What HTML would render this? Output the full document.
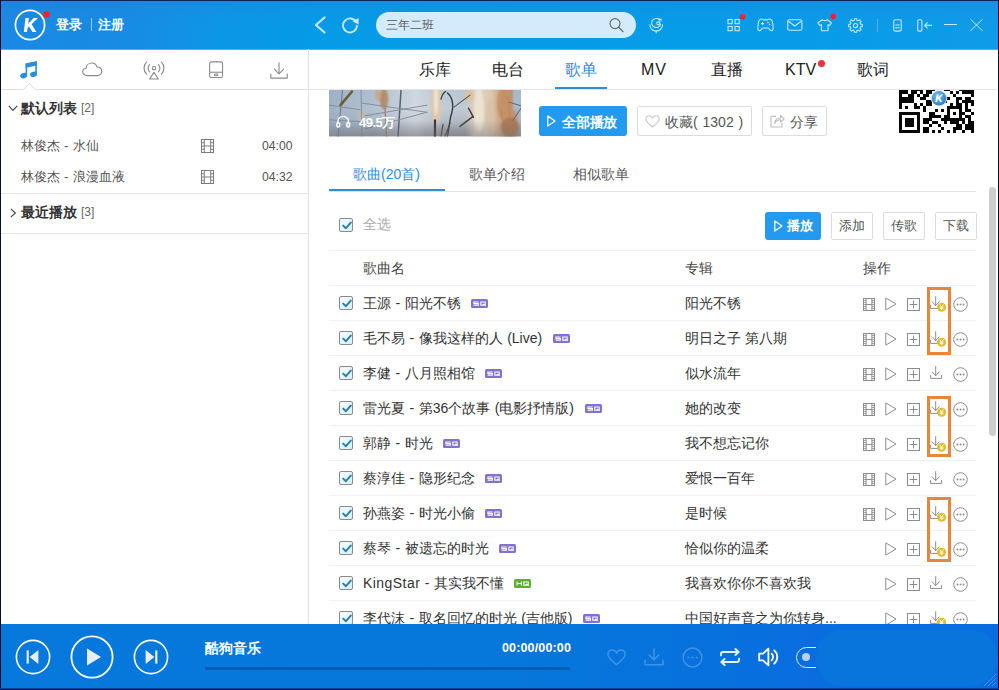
<!DOCTYPE html><html lang="zh"><head><meta charset="utf-8"><title>KuGou</title><style>
*{margin:0;padding:0;box-sizing:border-box}
html,body{width:999px;height:690px;overflow:hidden;background:#fff}
body{position:relative;font-family:"Liberation Sans",sans-serif;font-size:14px;color:#333}
.abs{position:absolute}
.t{position:absolute;white-space:nowrap;line-height:1}
svg{position:absolute;overflow:visible}
#top{left:0;top:0;width:999px;height:50px;background:linear-gradient(to bottom,rgba(45,120,215,0.40) 0,rgba(45,120,215,0.12) 22%,rgba(45,120,215,0) 55%),linear-gradient(to right,#1b89e3 0,#188be4 12%,#0c96e6 22%,#059be7 31%,#059ce8 72%,#0f9be8 100%);border-bottom:1px solid #4fb0ec}
#bot{left:0;top:624px;width:999px;height:66px;background:linear-gradient(to right,#0779dd 0,#0677db 50%,#0771dd 72%,#0a6ce1 85%,#0a6ce1 100%)}
.hl{position:absolute;height:1px;background:#f1f1f1}
.cb{position:absolute;width:14px;height:14px;border:1px solid #8a8a8a;border-radius:2px;background:linear-gradient(135deg,#f4fbfd,#d9f1f8)}
.btn{position:absolute;height:28px;border:1px solid #dcdcdc;border-radius:2px;background:#fff;color:#555;font-size:13px;text-align:center;line-height:26px}
</style></head><body>
<div id="top" class="abs"></div>
<svg style="left:14px;top:9px" width="34" height="32" viewBox="0 0 34 32"><circle cx="16" cy="16" r="14.6" fill="none" stroke="#fff" stroke-width="1.7"/><path d="M11.5 9 h3.3 l-0.6 5.8 l5.6 -5.8 h4.2 l-6.5 6.3 l5 7.7 h-4 l-3.4 -5.6 l-1.6 1.5 l-0.5 4.1 h-3.2 z" fill="#fff"/><circle cx="32.5" cy="5.3" r="3.4" fill="#f5222d"/></svg>
<div class="t" style="left:56px;top:18px;font-size:13px;font-weight:bold;color:#fff">登录</div>
<div class="abs" style="left:91px;top:18px;width:1px;height:13px;background:#9fd0f5"></div>
<div class="t" style="left:98px;top:18px;font-size:13px;font-weight:bold;color:#fff">注册</div>
<svg style="left:313px;top:16px" width="14" height="18" viewBox="0 0 14 18"><path d="M11.5 1.5 L3 9 L11.5 16.5" fill="none" stroke="#c9e8fb" stroke-width="2.2" stroke-linecap="round" stroke-linejoin="round"/></svg>
<svg style="left:341px;top:16px" width="19" height="18" viewBox="0 0 19 18"><path d="M15.2 6.2 A7 7 0 1 0 16 9.6" fill="none" stroke="#c9e8fb" stroke-width="1.8" stroke-linecap="round"/><path d="M11.4 5.2 L17.6 8.6 L17.6 2 z" fill="#c9e8fb"/></svg>
<div class="abs" style="left:376px;top:12px;width:260px;height:26px;border-radius:13px;background:#d3ebfb"></div>
<div class="t" style="left:386px;top:19px;font-size:12px;color:#585858">三年二班</div>
<svg style="left:608px;top:17px" width="18" height="17" viewBox="0 0 18 17"><circle cx="7" cy="6.6" r="5" fill="none" stroke="#666" stroke-width="1.1"/><path d="M10.7 10.3 L15 14.6" stroke="#666" stroke-width="1.3" stroke-linecap="round"/></svg>
<svg style="left:648.2px;top:16.6px" width="16.4" height="16.4" viewBox="0 0 18 18"><g fill="none" stroke="#c4e9fc" stroke-width="1.2" stroke-linecap="round"><path d="M12.5 3 A5 5 0 1 0 13.8 8"/><path d="M2 8.5 A7 7 0 0 0 16 8.5"/><path d="M9 15.5 V17.5"/><circle cx="11.3" cy="7" r="1.6"/><path d="M12.9 7 V2.2 L15 3.4"/></g></svg>
<svg style="left:727px;top:16px" width="20" height="16" viewBox="0 0 20 16"><g fill="none" stroke="#c4e9fc" stroke-width="1.1"><rect x="1" y="3.5" width="4.2" height="4.2"/><rect x="8" y="3.5" width="4.2" height="4.2"/><rect x="1" y="10.5" width="4.2" height="4.2"/><rect x="8" y="10.5" width="4.2" height="4.2"/></g><circle cx="15.5" cy="0.8" r="2.8" fill="#f5222d"/></svg>
<svg style="left:757px;top:18px" width="17" height="14" viewBox="0 0 17 14"><path d="M4.6 1 C2.5 1 1.6 3 1.2 6 C0.7 9.5 0.4 12.6 2.4 12.8 C4 13 4.6 10.2 6 10 H11 C12.4 10.2 13 13 14.6 12.8 C16.6 12.6 16.3 9.5 15.8 6 C15.4 3 14.5 1 12.4 1 C11.2 1 11 1.9 10 1.9 H7 C6 1.9 5.8 1 4.6 1 Z" fill="none" stroke="#c4e9fc" stroke-width="1.1" stroke-linejoin="round"/><path d="M4 5.6 H7 M5.5 4.1 V7.1" stroke="#c4e9fc" stroke-width="1.05"/><circle cx="11" cy="4.6" r="0.8" fill="#c9e8fb"/><circle cx="12.6" cy="6.6" r="0.8" fill="#c9e8fb"/></svg>
<svg style="left:787px;top:19px" width="16" height="12" viewBox="0 0 16 12"><rect x="0.7" y="0.7" width="14.2" height="10.6" rx="1.6" fill="none" stroke="#c4e9fc" stroke-width="1.1"/><path d="M1.5 2.2 L7.8 7 L14.2 2.2" fill="none" stroke="#c4e9fc" stroke-width="1.1" stroke-linejoin="round"/></svg>
<svg style="left:817px;top:13px" width="20" height="19" viewBox="0 0 20 19"><path d="M5.2 6.6 L0.9 10 L3 12.6 L4.4 11.6 V17.8 H11 V11.6 L12.4 12.6 L14.5 10 L10.2 6.6 C9.6 8 5.8 8 5.2 6.6 Z" fill="none" stroke="#c4e9fc" stroke-width="1.1" stroke-linejoin="round"/><circle cx="16.2" cy="3.6" r="2.8" fill="#f5222d"/></svg>
<svg style="left:848px;top:18px" width="15" height="15" viewBox="0 0 15 15"><path d="M6.26 2.35 L6.31 0.70 L8.69 0.70 L8.74 2.35 L10.27 2.98 L11.47 1.85 L13.15 3.53 L12.02 4.73 L12.65 6.26 L14.30 6.31 L14.30 8.69 L12.65 8.74 L12.02 10.27 L13.15 11.47 L11.47 13.15 L10.27 12.02 L8.74 12.65 L8.69 14.30 L6.31 14.30 L6.26 12.65 L4.73 12.02 L3.53 13.15 L1.85 11.47 L2.98 10.27 L2.35 8.74 L0.70 8.69 L0.70 6.31 L2.35 6.26 L2.98 4.73 L1.85 3.53 L3.53 1.85 L4.73 2.98 Z" fill="none" stroke="#c4e9fc" stroke-width="1.05" stroke-linejoin="round"/><circle cx="7.5" cy="7.5" r="2.1" fill="none" stroke="#c4e9fc" stroke-width="1.05"/></svg>
<div class="abs" style="left:877px;top:19px;width:1px;height:13px;background:#5cb0ee"></div>
<svg style="left:893px;top:19px" width="9" height="13" viewBox="0 0 9 13"><rect x="0.7" y="0.7" width="7.6" height="11.4" rx="1.5" fill="none" stroke="#c4e9fc" stroke-width="1.1"/><path d="M2.2 6 H6.8 M2.2 8.8 H6.8" stroke="#c4e9fc" stroke-width="1.05"/></svg>
<svg style="left:917px;top:19px" width="16" height="13" viewBox="0 0 16 13"><rect x="0.7" y="0.7" width="4.2" height="11.4" rx="1.3" fill="none" stroke="#c4e9fc" stroke-width="1.1"/><path d="M7.5 6.4 H15 M10.6 3.4 L7.6 6.4 L10.6 9.4" fill="none" stroke="#c4e9fc" stroke-width="1.1"/></svg>
<div class="abs" style="left:944px;top:24px;width:13px;height:1px;background:#c9e8fb"></div>
<svg style="left:970px;top:19px" width="13" height="12" viewBox="0 0 13 12"><path d="M0.5 0.3 L12.5 11.7 M12.5 0.3 L0.5 11.7" stroke="#c4e9fc" stroke-width="1"/></svg>
<div class="abs" style="left:308px;top:49px;width:1px;height:575px;background:#e3e3e3"></div>
<svg style="left:20px;top:61px" width="18" height="18" viewBox="0 0 18 18"><g fill="#2b8ddb"><ellipse cx="3.7" cy="14.6" rx="3.5" ry="2.7" transform="rotate(-18 3.7 14.6)"/><ellipse cx="13.6" cy="13.3" rx="3.5" ry="2.7" transform="rotate(-18 13.6 13.3)"/><path d="M5.6 2.6 L16.9 0.2 V13.3 H15.3 V4.2 L7.2 5.9 V14.6 H5.6 Z"/><path d="M5.6 2.6 L16.9 0.2 V4.4 L5.6 6.8 Z"/></g></svg>
<svg style="left:81.6px;top:62.2px" width="20.6" height="14.6" viewBox="0 0 23 16"><path d="M6 15 C2.6 15 0.8 13 0.8 10.8 C0.8 8.6 2.4 7 4.6 6.8 C4.8 3.6 7.4 1 10.8 1 C13.8 1 16 2.8 16.8 5.4 C19.8 5.4 22 7.4 22 10.2 C22 13 19.8 15 17 15 Z" fill="none" stroke="#8a8a8a" stroke-width="1.3" stroke-linejoin="round"/></svg>
<svg style="left:143px;top:61px" width="22" height="19" viewBox="0 0 22 19"><g fill="none" stroke="#8a8a8a" stroke-width="1.15" stroke-linecap="round"><path d="M3.6 1.2 A8.4 8.4 0 0 0 3.6 13.2"/><path d="M18.4 1.2 A8.4 8.4 0 0 1 18.4 13.2"/><path d="M6.6 3.6 A5 5 0 0 0 6.6 10.8"/><path d="M15.4 3.6 A5 5 0 0 1 15.4 10.8"/><circle cx="11" cy="7.2" r="1.7"/><path d="M11 11.4 L6.6 18 H15.4 Z" stroke-linejoin="round"/></g></svg>
<svg style="left:209px;top:61px" width="14.4" height="17.6" viewBox="0 0 16 19"><g fill="none" stroke="#8a8a8a" stroke-width="1.2"><rect x="0.7" y="0.7" width="14.4" height="17.4" rx="2"/><path d="M0.7 12.2 H15.1"/><rect x="6" y="14.2" width="3.8" height="2" rx="1"/></g></svg>
<svg style="left:269.8px;top:61.8px" width="18" height="17.4" viewBox="0 0 19 18"><g fill="none" stroke="#8a8a8a" stroke-width="1.2" stroke-linecap="round" stroke-linejoin="round"><path d="M9.5 0.8 V12"/><path d="M4.6 7.4 L9.5 12.3 L14.4 7.4"/><path d="M0.8 12.6 V16.8 H18.2 V12.6"/></g></svg>
<svg style="left:1px;top:82px" width="307" height="8" viewBox="0 0 307 8"><path d="M0 7.5 H22.5 L28.5 1.5 L34.5 7.5 H307" fill="none" stroke="#dedede" stroke-width="1"/></svg>
<svg style="left:8px;top:105px" width="10" height="7" viewBox="0 0 10 7"><path d="M0.8 0.8 L5 5.4 L9.2 0.8" fill="none" stroke="#444" stroke-width="1.1"/></svg>
<div class="t" style="left:21px;top:102px;font-size:13.5px;font-weight:bold;color:#333">默认列表</div>
<div class="t" style="left:81px;top:102px;font-size:12px;color:#666">[2]</div>
<div class="t" style="left:21px;top:139px;font-size:13.3px;color:#555;word-spacing:0.4px">林俊杰 - 水仙</div>
<svg style="left:201px;top:139px" width="13" height="14" viewBox="0 0 13 14"><g fill="none" stroke="#7d7d7d" stroke-width="1"><rect x="0.5" y="0.5" width="12" height="13"/><path d="M3.3 0.5 V13.5 M9.7 0.5 V13.5 M3.3 7 H9.7 M0.5 3.7 H3.3 M0.5 7 H3.3 M0.5 10.3 H3.3 M9.7 3.7 H12.5 M9.7 7 H12.5 M9.7 10.3 H12.5"/></g></svg>
<div class="t" style="left:262px;top:140px;font-size:12.2px;color:#555">04:00</div>
<div class="t" style="left:21px;top:170px;font-size:13.3px;color:#555;word-spacing:0.4px">林俊杰 - 浪漫血液</div>
<svg style="left:201px;top:170px" width="13" height="14" viewBox="0 0 13 14"><g fill="none" stroke="#7d7d7d" stroke-width="1"><rect x="0.5" y="0.5" width="12" height="13"/><path d="M3.3 0.5 V13.5 M9.7 0.5 V13.5 M3.3 7 H9.7 M0.5 3.7 H3.3 M0.5 7 H3.3 M0.5 10.3 H3.3 M9.7 3.7 H12.5 M9.7 7 H12.5 M9.7 10.3 H12.5"/></g></svg>
<div class="t" style="left:262px;top:171px;font-size:12.2px;color:#555">04:32</div>
<div class="hl" style="left:1px;top:193px;width:307px;background:#e6e6e6"></div>
<svg style="left:10px;top:208px" width="7" height="10" viewBox="0 0 7 10"><path d="M0.8 0.8 L5.4 5 L0.8 9.2" fill="none" stroke="#444" stroke-width="1.1"/></svg>
<div class="t" style="left:21px;top:206px;font-size:13.5px;font-weight:bold;color:#333">最近播放</div>
<div class="t" style="left:81px;top:206px;font-size:12px;color:#666">[3]</div>
<div class="hl" style="left:1px;top:233px;width:307px;background:#e6e6e6"></div>
<div class="t" style="left:419px;top:62px;font-size:16px;color:#222">乐库</div>
<div class="t" style="left:492px;top:62px;font-size:16px;color:#222">电台</div>
<div class="t" style="left:565px;top:62px;font-size:16px;color:#2b8ddb">歌单</div>
<div class="t" style="left:641px;top:62px;font-size:16px;color:#222;letter-spacing:1px">MV</div>
<div class="t" style="left:711px;top:62px;font-size:16px;color:#222">直播</div>
<div class="t" style="left:785px;top:62px;font-size:16px;color:#222">KTV</div>
<div class="t" style="left:857px;top:62px;font-size:16px;color:#222">歌词</div>
<div class="hl" style="left:309px;top:89px;width:688px;background:#e4e4e4"></div>
<div class="abs" style="left:555px;top:87px;width:52px;height:2px;background:#2b8ddb"></div>
<div class="abs" style="left:818px;top:60px;width:7px;height:7px;border-radius:50%;background:#f0303a"></div>
<svg style="left:329px;top:89.5px" width="192" height="46.5" viewBox="0 0 192 46" preserveAspectRatio="none">
<defs><linearGradient id="bg" x1="0" y1="0" x2="0" y2="1"><stop offset="0" stop-color="#b7c6d5"/><stop offset="0.4" stop-color="#c2ccd6"/><stop offset="0.72" stop-color="#abb1ba"/><stop offset="1" stop-color="#808287"/></linearGradient>
<linearGradient id="bgx" x1="0" y1="0" x2="1" y2="0"><stop offset="0" stop-color="#93a9c0" stop-opacity="0.75"/><stop offset="0.22" stop-color="#a3b6c9" stop-opacity="0.5"/><stop offset="0.45" stop-color="#dde2e6" stop-opacity="0.6"/><stop offset="0.6" stop-color="#c3ced8" stop-opacity="0.3"/><stop offset="1" stop-color="#a3b4c4" stop-opacity="0.3"/></linearGradient>
<linearGradient id="rm" x1="0" y1="0" x2="1" y2="0"><stop offset="0" stop-color="#d9cab8" stop-opacity="0"/><stop offset="0.18" stop-color="#e0d2c0" stop-opacity="0.95"/><stop offset="0.46" stop-color="#dcc9b2"/><stop offset="0.68" stop-color="#c99b76"/><stop offset="0.84" stop-color="#c08d66"/><stop offset="0.93" stop-color="#b79a82" stop-opacity="0.7"/><stop offset="1" stop-color="#a9b9c9" stop-opacity="0.2"/></linearGradient>
<filter id="bl" x="-30%" y="-30%" width="160%" height="160%"><feGaussianBlur stdDeviation="1.3"/></filter>
<filter id="bl2" x="-20%" y="-20%" width="140%" height="140%"><feGaussianBlur stdDeviation="0.6"/></filter>
<clipPath id="cp"><rect x="0" y="0" width="192" height="46"/></clipPath></defs>
<g clip-path="url(#cp)">
<rect width="192" height="46" fill="url(#bg)"/><rect width="192" height="46" fill="url(#bgx)"/>
<rect x="136" y="-2" width="56" height="50" fill="url(#rm)"/>
<g filter="url(#bl)">
<ellipse cx="55" cy="9" rx="4.2" ry="10.5" fill="#b68d6c"/>
<ellipse cx="33" cy="27" rx="2.6" ry="8" fill="#ccb9a6"/><ellipse cx="49" cy="5" rx="3" ry="6" fill="#c7a98d"/>
<ellipse cx="107" cy="12" rx="5.6" ry="22" fill="#dcc7ad"/>
<ellipse cx="107" cy="10" rx="2" ry="15" fill="#efe5d6"/>
<ellipse cx="150" cy="20" rx="5" ry="22" fill="#ece2d4"/>
<ellipse cx="161" cy="26" rx="4" ry="18" fill="#d8c3a6"/>
<ellipse cx="174" cy="14" rx="6" ry="16" fill="#c38d63" opacity="0.8"/>
<ellipse cx="181" cy="37" rx="9" ry="10" fill="#a9764f" opacity="0.85"/>
<rect x="184" y="-2" width="10" height="22" fill="#a6bacc"/>
<ellipse cx="140" cy="6" rx="5" ry="7" fill="#d9c4a9"/>
</g>
<g filter="url(#bl2)" fill="none" stroke-linecap="round">
<path d="M13.5 0 L9 46" stroke="#71808f" stroke-width="1.2"/>
<path d="M23 1.5 L11.5 15" stroke="#6e5c33" stroke-width="2.6"/>
<path d="M32 0 L33 46" stroke="#8492a1" stroke-width="1"/>
<path d="M56 18 L57.5 46" stroke="#a08468" stroke-width="1.3"/>
<path d="M72 0 L69 46" stroke="#54616f" stroke-width="1.5"/>
<path d="M0 15 L31 19.5 M33 13 L98 22 M36 25.5 L98 15 M0 29.5 L36 31.5 M36 38.5 L98 22" stroke="#7c8b9c" stroke-width="0.9"/>
<path d="M106 30 L106 46" stroke="#3a3836" stroke-width="2.2"/>
<path d="M112 9 C113 5 115 2.5 116.5 1.5" stroke="#3d3d42" stroke-width="1.3"/>
<path d="M118.5 3 C124 8 125 17 121.5 27 L118.5 46" stroke="#3b3b3f" stroke-width="1.4"/>
<path d="M125 17 L141 5" stroke="#4c5058" stroke-width="1"/>
<path d="M131 36 L144 26 M139.5 18 L144.5 27" stroke="#46413c" stroke-width="1.5"/>
<path d="M112 46 L114 34 M116 46 L121 33" stroke="#4a4643" stroke-width="1.2"/>
<path d="M180 12 L192 15.5 M184 30 L192 18" stroke="#5d6873" stroke-width="1"/>
<path d="M172 20 L176 46 M179 6 L181 30" stroke="#b07d56" stroke-width="0.8" opacity="0.6"/>
</g>
<rect y="30" width="192" height="16" fill="url(#dk)"/>
</g>
<defs><linearGradient id="dk" x1="0" y1="0" x2="0" y2="1"><stop offset="0" stop-color="#6f7076" stop-opacity="0"/><stop offset="1" stop-color="#6f7076" stop-opacity="0.45"/></linearGradient></defs>
</svg>
<svg style="left:336.4px;top:115px" width="14.4" height="13" viewBox="0 0 13 13" preserveAspectRatio="none"><g fill="none" stroke="#fff" stroke-width="1.3" stroke-linecap="round"><path d="M1.8 8 V6 A4.7 4.7 0 0 1 11.2 6 V8"/><rect x="0.8" y="7.6" width="2.4" height="4.4" rx="1.1"/><rect x="9.8" y="7.6" width="2.4" height="4.4" rx="1.1"/></g></svg>
<div class="t" style="left:359px;top:116px;font-size:13px;font-weight:bold;color:#fff;letter-spacing:-0.5px">49.5万</div>
<div class="abs" style="left:539px;top:106px;width:88px;height:30px;border-radius:3px;background:#239af0"></div>
<svg style="left:547px;top:115px" width="9" height="12" viewBox="0 0 9 12"><path d="M0.8 0.9 L8 6 L0.8 11.1 Z" fill="none" stroke="#fff" stroke-width="1.2" stroke-linejoin="round"/></svg>
<div class="t" style="left:562px;top:115px;font-size:14px;font-weight:bold;color:#fff;letter-spacing:-0.2px">全部播放</div>
<div class="btn" style="left:637px;top:106px;width:115px;height:30px"></div>
<svg style="left:645px;top:115px" width="15" height="13" viewBox="0 0 15 13"><path d="M7.5 12 C5 9.8 0.8 7 0.8 4 C0.8 2 2.2 0.8 4 0.8 C5.6 0.8 6.8 1.8 7.5 3 C8.2 1.8 9.4 0.8 11 0.8 C12.8 0.8 14.2 2 14.2 4 C14.2 7 10 9.8 7.5 12 Z" fill="none" stroke="#c9c9c9" stroke-width="1.1"/></svg>
<div class="t" style="left:665px;top:114.5px;font-size:14px;color:#555;word-spacing:1px">收藏( 1302 )</div>
<div class="btn" style="left:762px;top:106px;width:65px;height:30px"></div>
<svg style="left:770px;top:114px" width="15" height="14" viewBox="0 0 15 14"><g fill="none" stroke="#bdbdbd" stroke-width="1.1" stroke-linejoin="round"><path d="M6 2.4 H1 V13 H12 V9"/><path d="M4.6 9.4 C5 5.8 7.4 4 10.6 4 V1.4 L14.2 4.8 L10.6 8.2 V5.8 C8 5.8 6 6.8 4.6 9.4 Z"/></g></svg>
<div class="t" style="left:790px;top:114.5px;font-size:14px;color:#555">分享</div>
<svg style="left:899px;top:90px" width="75" height="44" viewBox="0 0 75 44" shape-rendering="crispEdges"><g fill="#050505"><rect x="0" y="0.0" width="9" height="1.0"/><rect x="12" y="0.0" width="12" height="1.0"/><rect x="27" y="0.0" width="9" height="1.0"/><rect x="45" y="0.0" width="6" height="1.0"/><rect x="60" y="0.0" width="15" height="1.0"/><rect x="0" y="1.0" width="9" height="3.0"/><rect x="12" y="1.0" width="6" height="3.0"/><rect x="21" y="1.0" width="3" height="3.0"/><rect x="27" y="1.0" width="6" height="3.0"/><rect x="51" y="1.0" width="3" height="3.0"/><rect x="57" y="1.0" width="3" height="3.0"/><rect x="63" y="1.0" width="12" height="3.0"/><rect x="0" y="4.0" width="3" height="3.0"/><rect x="9" y="4.0" width="6" height="3.0"/><rect x="18" y="4.0" width="3" height="3.0"/><rect x="24" y="4.0" width="6" height="3.0"/><rect x="54" y="4.0" width="3" height="3.0"/><rect x="72" y="4.0" width="3" height="3.0"/><rect x="0" y="7.0" width="15" height="3.0"/><rect x="21" y="7.0" width="6" height="3.0"/><rect x="48" y="7.0" width="3" height="3.0"/><rect x="57" y="7.0" width="6" height="3.0"/><rect x="66" y="7.0" width="6" height="3.0"/><rect x="0" y="10.0" width="15" height="3.0"/><rect x="27" y="10.0" width="6" height="3.0"/><rect x="45" y="10.0" width="3" height="3.0"/><rect x="57" y="10.0" width="3" height="3.0"/><rect x="63" y="10.0" width="12" height="3.0"/><rect x="0" y="13.0" width="3" height="3.0"/><rect x="15" y="13.0" width="3" height="3.0"/><rect x="21" y="13.0" width="3" height="3.0"/><rect x="27" y="13.0" width="6" height="3.0"/><rect x="51" y="13.0" width="3" height="3.0"/><rect x="57" y="13.0" width="6" height="3.0"/><rect x="66" y="13.0" width="3" height="3.0"/><rect x="72" y="13.0" width="3" height="3.0"/><rect x="0" y="16.0" width="3" height="3.0"/><rect x="6" y="16.0" width="3" height="3.0"/><rect x="15" y="16.0" width="6" height="3.0"/><rect x="24" y="16.0" width="3" height="3.0"/><rect x="48" y="16.0" width="15" height="3.0"/><rect x="66" y="16.0" width="3" height="3.0"/><rect x="24" y="19.0" width="3" height="3.0"/><rect x="36" y="19.0" width="3" height="3.0"/><rect x="42" y="19.0" width="3" height="3.0"/><rect x="48" y="19.0" width="3" height="3.0"/><rect x="60" y="19.0" width="3" height="3.0"/><rect x="66" y="19.0" width="6" height="3.0"/><rect x="0" y="22.0" width="21" height="3.0"/><rect x="30" y="22.0" width="6" height="3.0"/><rect x="48" y="22.0" width="3" height="3.0"/><rect x="54" y="22.0" width="3" height="3.0"/><rect x="60" y="22.0" width="6" height="3.0"/><rect x="72" y="22.0" width="3" height="3.0"/><rect x="0" y="25.0" width="3" height="3.0"/><rect x="18" y="25.0" width="3" height="3.0"/><rect x="30" y="25.0" width="12" height="3.0"/><rect x="45" y="25.0" width="6" height="3.0"/><rect x="60" y="25.0" width="3" height="3.0"/><rect x="66" y="25.0" width="6" height="3.0"/><rect x="0" y="28.0" width="3" height="3.0"/><rect x="6" y="28.0" width="9" height="3.0"/><rect x="18" y="28.0" width="3" height="3.0"/><rect x="24" y="28.0" width="9" height="3.0"/><rect x="42" y="28.0" width="24" height="3.0"/><rect x="69" y="28.0" width="3" height="3.0"/><rect x="0" y="31.0" width="3" height="3.0"/><rect x="6" y="31.0" width="9" height="3.0"/><rect x="18" y="31.0" width="3" height="3.0"/><rect x="24" y="31.0" width="6" height="3.0"/><rect x="33" y="31.0" width="6" height="3.0"/><rect x="45" y="31.0" width="3" height="3.0"/><rect x="51" y="31.0" width="9" height="3.0"/><rect x="63" y="31.0" width="3" height="3.0"/><rect x="69" y="31.0" width="6" height="3.0"/><rect x="0" y="34.0" width="3" height="3.0"/><rect x="6" y="34.0" width="9" height="3.0"/><rect x="18" y="34.0" width="3" height="3.0"/><rect x="30" y="34.0" width="3" height="3.0"/><rect x="39" y="34.0" width="3" height="3.0"/><rect x="57" y="34.0" width="6" height="3.0"/><rect x="66" y="34.0" width="9" height="3.0"/><rect x="0" y="37.0" width="3" height="3.0"/><rect x="18" y="37.0" width="3" height="3.0"/><rect x="24" y="37.0" width="6" height="3.0"/><rect x="42" y="37.0" width="3" height="3.0"/><rect x="54" y="37.0" width="9" height="3.0"/><rect x="66" y="37.0" width="9" height="3.0"/><rect x="0" y="40.0" width="21" height="3.0"/><rect x="24" y="40.0" width="6" height="3.0"/><rect x="33" y="40.0" width="3" height="3.0"/><rect x="39" y="40.0" width="3" height="3.0"/><rect x="48" y="40.0" width="3" height="3.0"/><rect x="54" y="40.0" width="3" height="3.0"/><rect x="63" y="40.0" width="3" height="3.0"/><rect x="72" y="40.0" width="3" height="3.0"/></g></svg>
<svg style="left:930px;top:89px" width="18" height="18" viewBox="0 0 18 18"><defs><radialGradient id="kg" cx="0.4" cy="0.35" r="0.75"><stop offset="0" stop-color="#7cc0f0"/><stop offset="1" stop-color="#1a78c8"/></radialGradient></defs><circle cx="9" cy="9.3" r="8.2" fill="#e4f1fb"/><circle cx="9" cy="9.3" r="7.3" fill="url(#kg)"/><path d="M6.8 5.4 h1.9 l-0.5 3 l2.9 -3 h2.2 l-3.4 3.3 l2.3 4.2 h-2.1 l-1.6 -3 l-1 1 l-0.4 2 h-1.8 z" fill="#fff"/></svg>
<div class="t" style="left:353px;top:167px;font-size:14px;color:#2b8ddb">歌曲(20首)</div>
<div class="t" style="left:469px;top:167px;font-size:14px;color:#555">歌单介绍</div>
<div class="t" style="left:573px;top:167px;font-size:14px;color:#555">相似歌单</div>
<div class="hl" style="left:329px;top:191px;width:647px;background:#e2e2e2"></div>
<div class="abs" style="left:329px;top:188.5px;width:116px;height:2.5px;background:#2b8ddb"></div>
<div class="abs" style="left:989px;top:187px;width:7px;height:249px;border-radius:4px;background:#cdcdcd"></div>
<div class="cb" style="left:339px;top:218px"><svg style="left:1.5px;top:1.5px" width="10" height="9" viewBox="0 0 10 9"><path d="M1.2 4.6 L3.9 7.2 L8.8 1.6" fill="none" stroke="#2a82ad" stroke-width="2" stroke-linecap="round" stroke-linejoin="round"/></svg></div>
<div class="t" style="left:363px;top:217px;font-size:14px;color:#aaa">全选</div>
<div class="abs" style="left:765px;top:212px;width:56px;height:28px;border-radius:3px;background:#239af0"></div>
<svg style="left:774px;top:220px" width="9" height="12" viewBox="0 0 9 12"><path d="M0.8 0.9 L8 6 L0.8 11.1 Z" fill="none" stroke="#fff" stroke-width="1.2" stroke-linejoin="round"/></svg>
<div class="t" style="left:787px;top:219px;font-size:13px;font-weight:bold;color:#fff;letter-spacing:-0.5px">播放</div>
<div class="btn" style="left:831px;top:212px;width:42px">添加</div>
<div class="btn" style="left:883px;top:212px;width:42px">传歌</div>
<div class="btn" style="left:935px;top:212px;width:42px">下载</div>
<div class="hl" style="left:329px;top:250px;width:647px"></div>
<div class="t" style="left:363px;top:261px;font-size:14px;color:#444">歌曲名</div>
<div class="t" style="left:685px;top:261px;font-size:14px;color:#444">专辑</div>
<div class="t" style="left:863px;top:261px;font-size:14px;color:#444">操作</div>
<div class="hl" style="left:329px;top:285px;width:647px"></div>
<div class="cb" style="left:339px;top:296px"><svg style="left:1.5px;top:1.5px" width="10" height="9" viewBox="0 0 10 9"><path d="M1.2 4.6 L3.9 7.2 L8.8 1.6" fill="none" stroke="#2a82ad" stroke-width="2" stroke-linecap="round" stroke-linejoin="round"/></svg></div>
<div class="t" style="left:363px;top:296px;font-size:14px;color:#333;word-spacing:0.6px">王源 - 阳光不锈</div>
<svg style="left:471px;top:299px" width="17" height="9" viewBox="0 0 17 9"><rect x="0" y="0" width="17" height="9" rx="1.6" fill="#8271cd"/><g fill="none" stroke="#fff" stroke-width="1.05"><path d="M7.6 2.9 H2.9 V4.5 H7.4 V6.1 H2.6" /><path d="M9.8 2.9 H14.2 V6.1 H9.8 Z M12.3 4.9 L14.8 6.9" /></g></svg>
<div class="t" style="left:685px;top:296px;font-size:14px;color:#333">阳光不锈</div>
<svg style="left:863px;top:298px" width="12" height="13" viewBox="0 0 12 13"><g fill="none" stroke="#8c8c8c" stroke-width="1"><rect x="0.5" y="0.5" width="11" height="12"/><path d="M3.1 0.5 V12.5 M8.9 0.5 V12.5 M3.1 6.5 H8.9"/><path d="M0.5 2.5 H3.1 M0.5 4.5 H3.1 M0.5 6.5 H3.1 M0.5 8.5 H3.1 M0.5 10.5 H3.1 M8.9 2.5 H11.5 M8.9 4.5 H11.5 M8.9 6.5 H11.5 M8.9 8.5 H11.5 M8.9 10.5 H11.5" stroke-width="0.8"/></g></svg>
<svg style="left:885px;top:297px" width="12" height="14" viewBox="0 0 12 14"><path d="M0.8 0.9 L11 7 L0.8 13.1 Z" fill="none" stroke="#8c8c8c" stroke-width="1" stroke-linejoin="round"/></svg>
<svg style="left:907px;top:298px" width="13" height="13" viewBox="0 0 13 13"><g fill="none" stroke="#8c8c8c" stroke-width="1"><rect x="0.5" y="0.5" width="12" height="12"/><path d="M6.5 2.6 V10.4 M2.6 6.5 H10.4"/></g></svg>
<svg style="left:930px;top:296px" width="17" height="16" viewBox="0 0 17 16"><g fill="none" stroke="#8c8c8c" stroke-width="1" stroke-linecap="round" stroke-linejoin="round"><path d="M5.7 0.6 V9.4"/><path d="M2.2 5.9 L5.7 9.6 L9.2 5.9"/><path d="M0.6 9.4 V12.4 H11.6 V9.4"/></g><circle cx="11.6" cy="11.2" r="4.5" fill="#e2bc2c"/><path d="M9.7 8.5 L11.6 11 L13.5 8.5 M11.6 11 V14 M9.8 11.2 H13.4 M9.8 12.6 H13.4" fill="none" stroke="#fffbe6" stroke-width="0.95"/></svg>
<svg style="left:953px;top:297px" width="15" height="15" viewBox="0 0 15 15"><circle cx="7.5" cy="7.5" r="6.8" fill="none" stroke="#8c8c8c" stroke-width="1"/><g fill="#8c8c8c"><circle cx="4.4" cy="7.5" r="1"/><circle cx="7.5" cy="7.5" r="1"/><circle cx="10.6" cy="7.5" r="1"/></g></svg>
<div class="hl" style="left:329px;top:320px;width:647px"></div>
<div class="cb" style="left:339px;top:331px"><svg style="left:1.5px;top:1.5px" width="10" height="9" viewBox="0 0 10 9"><path d="M1.2 4.6 L3.9 7.2 L8.8 1.6" fill="none" stroke="#2a82ad" stroke-width="2" stroke-linecap="round" stroke-linejoin="round"/></svg></div>
<div class="t" style="left:363px;top:331px;font-size:14px;color:#333;word-spacing:0.6px">毛不易 - 像我这样的人 (Live)</div>
<svg style="left:553px;top:334px" width="17" height="9" viewBox="0 0 17 9"><rect x="0" y="0" width="17" height="9" rx="1.6" fill="#8271cd"/><g fill="none" stroke="#fff" stroke-width="1.05"><path d="M7.6 2.9 H2.9 V4.5 H7.4 V6.1 H2.6" /><path d="M9.8 2.9 H14.2 V6.1 H9.8 Z M12.3 4.9 L14.8 6.9" /></g></svg>
<div class="t" style="left:685px;top:331px;font-size:14px;color:#333">明日之子 第八期</div>
<svg style="left:863px;top:333px" width="12" height="13" viewBox="0 0 12 13"><g fill="none" stroke="#8c8c8c" stroke-width="1"><rect x="0.5" y="0.5" width="11" height="12"/><path d="M3.1 0.5 V12.5 M8.9 0.5 V12.5 M3.1 6.5 H8.9"/><path d="M0.5 2.5 H3.1 M0.5 4.5 H3.1 M0.5 6.5 H3.1 M0.5 8.5 H3.1 M0.5 10.5 H3.1 M8.9 2.5 H11.5 M8.9 4.5 H11.5 M8.9 6.5 H11.5 M8.9 8.5 H11.5 M8.9 10.5 H11.5" stroke-width="0.8"/></g></svg>
<svg style="left:885px;top:332px" width="12" height="14" viewBox="0 0 12 14"><path d="M0.8 0.9 L11 7 L0.8 13.1 Z" fill="none" stroke="#8c8c8c" stroke-width="1" stroke-linejoin="round"/></svg>
<svg style="left:907px;top:333px" width="13" height="13" viewBox="0 0 13 13"><g fill="none" stroke="#8c8c8c" stroke-width="1"><rect x="0.5" y="0.5" width="12" height="12"/><path d="M6.5 2.6 V10.4 M2.6 6.5 H10.4"/></g></svg>
<svg style="left:930px;top:331px" width="17" height="16" viewBox="0 0 17 16"><g fill="none" stroke="#8c8c8c" stroke-width="1" stroke-linecap="round" stroke-linejoin="round"><path d="M5.7 0.6 V9.4"/><path d="M2.2 5.9 L5.7 9.6 L9.2 5.9"/><path d="M0.6 9.4 V12.4 H11.6 V9.4"/></g><circle cx="11.6" cy="11.2" r="4.5" fill="#e2bc2c"/><path d="M9.7 8.5 L11.6 11 L13.5 8.5 M11.6 11 V14 M9.8 11.2 H13.4 M9.8 12.6 H13.4" fill="none" stroke="#fffbe6" stroke-width="0.95"/></svg>
<svg style="left:953px;top:332px" width="15" height="15" viewBox="0 0 15 15"><circle cx="7.5" cy="7.5" r="6.8" fill="none" stroke="#8c8c8c" stroke-width="1"/><g fill="#8c8c8c"><circle cx="4.4" cy="7.5" r="1"/><circle cx="7.5" cy="7.5" r="1"/><circle cx="10.6" cy="7.5" r="1"/></g></svg>
<div class="hl" style="left:329px;top:355px;width:647px"></div>
<div class="cb" style="left:339px;top:366px"><svg style="left:1.5px;top:1.5px" width="10" height="9" viewBox="0 0 10 9"><path d="M1.2 4.6 L3.9 7.2 L8.8 1.6" fill="none" stroke="#2a82ad" stroke-width="2" stroke-linecap="round" stroke-linejoin="round"/></svg></div>
<div class="t" style="left:363px;top:366px;font-size:14px;color:#333;word-spacing:0.6px">李健 - 八月照相馆</div>
<svg style="left:485px;top:369px" width="17" height="9" viewBox="0 0 17 9"><rect x="0" y="0" width="17" height="9" rx="1.6" fill="#8271cd"/><g fill="none" stroke="#fff" stroke-width="1.05"><path d="M7.6 2.9 H2.9 V4.5 H7.4 V6.1 H2.6" /><path d="M9.8 2.9 H14.2 V6.1 H9.8 Z M12.3 4.9 L14.8 6.9" /></g></svg>
<div class="t" style="left:685px;top:366px;font-size:14px;color:#333">似水流年</div>
<svg style="left:863px;top:368px" width="12" height="13" viewBox="0 0 12 13"><g fill="none" stroke="#8c8c8c" stroke-width="1"><rect x="0.5" y="0.5" width="11" height="12"/><path d="M3.1 0.5 V12.5 M8.9 0.5 V12.5 M3.1 6.5 H8.9"/><path d="M0.5 2.5 H3.1 M0.5 4.5 H3.1 M0.5 6.5 H3.1 M0.5 8.5 H3.1 M0.5 10.5 H3.1 M8.9 2.5 H11.5 M8.9 4.5 H11.5 M8.9 6.5 H11.5 M8.9 8.5 H11.5 M8.9 10.5 H11.5" stroke-width="0.8"/></g></svg>
<svg style="left:885px;top:367px" width="12" height="14" viewBox="0 0 12 14"><path d="M0.8 0.9 L11 7 L0.8 13.1 Z" fill="none" stroke="#8c8c8c" stroke-width="1" stroke-linejoin="round"/></svg>
<svg style="left:907px;top:368px" width="13" height="13" viewBox="0 0 13 13"><g fill="none" stroke="#8c8c8c" stroke-width="1"><rect x="0.5" y="0.5" width="12" height="12"/><path d="M6.5 2.6 V10.4 M2.6 6.5 H10.4"/></g></svg>
<svg style="left:930px;top:366px" width="17" height="16" viewBox="0 0 17 16"><g fill="none" stroke="#8c8c8c" stroke-width="1" stroke-linecap="round" stroke-linejoin="round"><path d="M5.7 0.6 V9.4"/><path d="M2.2 5.9 L5.7 9.6 L9.2 5.9"/><path d="M0.6 9.4 V12.4 H11.6 V9.4"/></g></svg>
<svg style="left:953px;top:367px" width="15" height="15" viewBox="0 0 15 15"><circle cx="7.5" cy="7.5" r="6.8" fill="none" stroke="#8c8c8c" stroke-width="1"/><g fill="#8c8c8c"><circle cx="4.4" cy="7.5" r="1"/><circle cx="7.5" cy="7.5" r="1"/><circle cx="10.6" cy="7.5" r="1"/></g></svg>
<div class="hl" style="left:329px;top:390px;width:647px"></div>
<div class="cb" style="left:339px;top:401px"><svg style="left:1.5px;top:1.5px" width="10" height="9" viewBox="0 0 10 9"><path d="M1.2 4.6 L3.9 7.2 L8.8 1.6" fill="none" stroke="#2a82ad" stroke-width="2" stroke-linecap="round" stroke-linejoin="round"/></svg></div>
<div class="t" style="left:363px;top:401px;font-size:14px;color:#333;word-spacing:0.6px">雷光夏 - 第36个故事 (电影抒情版)</div>
<svg style="left:585px;top:404px" width="17" height="9" viewBox="0 0 17 9"><rect x="0" y="0" width="17" height="9" rx="1.6" fill="#8271cd"/><g fill="none" stroke="#fff" stroke-width="1.05"><path d="M7.6 2.9 H2.9 V4.5 H7.4 V6.1 H2.6" /><path d="M9.8 2.9 H14.2 V6.1 H9.8 Z M12.3 4.9 L14.8 6.9" /></g></svg>
<div class="t" style="left:685px;top:401px;font-size:14px;color:#333">她的改变</div>
<svg style="left:863px;top:403px" width="12" height="13" viewBox="0 0 12 13"><g fill="none" stroke="#8c8c8c" stroke-width="1"><rect x="0.5" y="0.5" width="11" height="12"/><path d="M3.1 0.5 V12.5 M8.9 0.5 V12.5 M3.1 6.5 H8.9"/><path d="M0.5 2.5 H3.1 M0.5 4.5 H3.1 M0.5 6.5 H3.1 M0.5 8.5 H3.1 M0.5 10.5 H3.1 M8.9 2.5 H11.5 M8.9 4.5 H11.5 M8.9 6.5 H11.5 M8.9 8.5 H11.5 M8.9 10.5 H11.5" stroke-width="0.8"/></g></svg>
<svg style="left:885px;top:402px" width="12" height="14" viewBox="0 0 12 14"><path d="M0.8 0.9 L11 7 L0.8 13.1 Z" fill="none" stroke="#8c8c8c" stroke-width="1" stroke-linejoin="round"/></svg>
<svg style="left:907px;top:403px" width="13" height="13" viewBox="0 0 13 13"><g fill="none" stroke="#8c8c8c" stroke-width="1"><rect x="0.5" y="0.5" width="12" height="12"/><path d="M6.5 2.6 V10.4 M2.6 6.5 H10.4"/></g></svg>
<svg style="left:930px;top:401px" width="17" height="16" viewBox="0 0 17 16"><g fill="none" stroke="#8c8c8c" stroke-width="1" stroke-linecap="round" stroke-linejoin="round"><path d="M5.7 0.6 V9.4"/><path d="M2.2 5.9 L5.7 9.6 L9.2 5.9"/><path d="M0.6 9.4 V12.4 H11.6 V9.4"/></g><circle cx="11.6" cy="11.2" r="4.5" fill="#e2bc2c"/><path d="M9.7 8.5 L11.6 11 L13.5 8.5 M11.6 11 V14 M9.8 11.2 H13.4 M9.8 12.6 H13.4" fill="none" stroke="#fffbe6" stroke-width="0.95"/></svg>
<svg style="left:953px;top:402px" width="15" height="15" viewBox="0 0 15 15"><circle cx="7.5" cy="7.5" r="6.8" fill="none" stroke="#8c8c8c" stroke-width="1"/><g fill="#8c8c8c"><circle cx="4.4" cy="7.5" r="1"/><circle cx="7.5" cy="7.5" r="1"/><circle cx="10.6" cy="7.5" r="1"/></g></svg>
<div class="hl" style="left:329px;top:425px;width:647px"></div>
<div class="cb" style="left:339px;top:436px"><svg style="left:1.5px;top:1.5px" width="10" height="9" viewBox="0 0 10 9"><path d="M1.2 4.6 L3.9 7.2 L8.8 1.6" fill="none" stroke="#2a82ad" stroke-width="2" stroke-linecap="round" stroke-linejoin="round"/></svg></div>
<div class="t" style="left:363px;top:436px;font-size:14px;color:#333;word-spacing:0.6px">郭静 - 时光</div>
<svg style="left:443px;top:439px" width="17" height="9" viewBox="0 0 17 9"><rect x="0" y="0" width="17" height="9" rx="1.6" fill="#8271cd"/><g fill="none" stroke="#fff" stroke-width="1.05"><path d="M7.6 2.9 H2.9 V4.5 H7.4 V6.1 H2.6" /><path d="M9.8 2.9 H14.2 V6.1 H9.8 Z M12.3 4.9 L14.8 6.9" /></g></svg>
<div class="t" style="left:685px;top:436px;font-size:14px;color:#333">我不想忘记你</div>
<svg style="left:863px;top:438px" width="12" height="13" viewBox="0 0 12 13"><g fill="none" stroke="#8c8c8c" stroke-width="1"><rect x="0.5" y="0.5" width="11" height="12"/><path d="M3.1 0.5 V12.5 M8.9 0.5 V12.5 M3.1 6.5 H8.9"/><path d="M0.5 2.5 H3.1 M0.5 4.5 H3.1 M0.5 6.5 H3.1 M0.5 8.5 H3.1 M0.5 10.5 H3.1 M8.9 2.5 H11.5 M8.9 4.5 H11.5 M8.9 6.5 H11.5 M8.9 8.5 H11.5 M8.9 10.5 H11.5" stroke-width="0.8"/></g></svg>
<svg style="left:885px;top:437px" width="12" height="14" viewBox="0 0 12 14"><path d="M0.8 0.9 L11 7 L0.8 13.1 Z" fill="none" stroke="#8c8c8c" stroke-width="1" stroke-linejoin="round"/></svg>
<svg style="left:907px;top:438px" width="13" height="13" viewBox="0 0 13 13"><g fill="none" stroke="#8c8c8c" stroke-width="1"><rect x="0.5" y="0.5" width="12" height="12"/><path d="M6.5 2.6 V10.4 M2.6 6.5 H10.4"/></g></svg>
<svg style="left:930px;top:436px" width="17" height="16" viewBox="0 0 17 16"><g fill="none" stroke="#8c8c8c" stroke-width="1" stroke-linecap="round" stroke-linejoin="round"><path d="M5.7 0.6 V9.4"/><path d="M2.2 5.9 L5.7 9.6 L9.2 5.9"/><path d="M0.6 9.4 V12.4 H11.6 V9.4"/></g><circle cx="11.6" cy="11.2" r="4.5" fill="#e2bc2c"/><path d="M9.7 8.5 L11.6 11 L13.5 8.5 M11.6 11 V14 M9.8 11.2 H13.4 M9.8 12.6 H13.4" fill="none" stroke="#fffbe6" stroke-width="0.95"/></svg>
<svg style="left:953px;top:437px" width="15" height="15" viewBox="0 0 15 15"><circle cx="7.5" cy="7.5" r="6.8" fill="none" stroke="#8c8c8c" stroke-width="1"/><g fill="#8c8c8c"><circle cx="4.4" cy="7.5" r="1"/><circle cx="7.5" cy="7.5" r="1"/><circle cx="10.6" cy="7.5" r="1"/></g></svg>
<div class="hl" style="left:329px;top:460px;width:647px"></div>
<div class="cb" style="left:339px;top:471px"><svg style="left:1.5px;top:1.5px" width="10" height="9" viewBox="0 0 10 9"><path d="M1.2 4.6 L3.9 7.2 L8.8 1.6" fill="none" stroke="#2a82ad" stroke-width="2" stroke-linecap="round" stroke-linejoin="round"/></svg></div>
<div class="t" style="left:363px;top:471px;font-size:14px;color:#333;word-spacing:0.6px">蔡淳佳 - 隐形纪念</div>
<svg style="left:485px;top:474px" width="17" height="9" viewBox="0 0 17 9"><rect x="0" y="0" width="17" height="9" rx="1.6" fill="#8271cd"/><g fill="none" stroke="#fff" stroke-width="1.05"><path d="M7.6 2.9 H2.9 V4.5 H7.4 V6.1 H2.6" /><path d="M9.8 2.9 H14.2 V6.1 H9.8 Z M12.3 4.9 L14.8 6.9" /></g></svg>
<div class="t" style="left:685px;top:471px;font-size:14px;color:#333">爱恨一百年</div>
<svg style="left:863px;top:473px" width="12" height="13" viewBox="0 0 12 13"><g fill="none" stroke="#8c8c8c" stroke-width="1"><rect x="0.5" y="0.5" width="11" height="12"/><path d="M3.1 0.5 V12.5 M8.9 0.5 V12.5 M3.1 6.5 H8.9"/><path d="M0.5 2.5 H3.1 M0.5 4.5 H3.1 M0.5 6.5 H3.1 M0.5 8.5 H3.1 M0.5 10.5 H3.1 M8.9 2.5 H11.5 M8.9 4.5 H11.5 M8.9 6.5 H11.5 M8.9 8.5 H11.5 M8.9 10.5 H11.5" stroke-width="0.8"/></g></svg>
<svg style="left:885px;top:472px" width="12" height="14" viewBox="0 0 12 14"><path d="M0.8 0.9 L11 7 L0.8 13.1 Z" fill="none" stroke="#8c8c8c" stroke-width="1" stroke-linejoin="round"/></svg>
<svg style="left:907px;top:473px" width="13" height="13" viewBox="0 0 13 13"><g fill="none" stroke="#8c8c8c" stroke-width="1"><rect x="0.5" y="0.5" width="12" height="12"/><path d="M6.5 2.6 V10.4 M2.6 6.5 H10.4"/></g></svg>
<svg style="left:930px;top:471px" width="17" height="16" viewBox="0 0 17 16"><g fill="none" stroke="#8c8c8c" stroke-width="1" stroke-linecap="round" stroke-linejoin="round"><path d="M5.7 0.6 V9.4"/><path d="M2.2 5.9 L5.7 9.6 L9.2 5.9"/><path d="M0.6 9.4 V12.4 H11.6 V9.4"/></g></svg>
<svg style="left:953px;top:472px" width="15" height="15" viewBox="0 0 15 15"><circle cx="7.5" cy="7.5" r="6.8" fill="none" stroke="#8c8c8c" stroke-width="1"/><g fill="#8c8c8c"><circle cx="4.4" cy="7.5" r="1"/><circle cx="7.5" cy="7.5" r="1"/><circle cx="10.6" cy="7.5" r="1"/></g></svg>
<div class="hl" style="left:329px;top:495px;width:647px"></div>
<div class="cb" style="left:339px;top:506px"><svg style="left:1.5px;top:1.5px" width="10" height="9" viewBox="0 0 10 9"><path d="M1.2 4.6 L3.9 7.2 L8.8 1.6" fill="none" stroke="#2a82ad" stroke-width="2" stroke-linecap="round" stroke-linejoin="round"/></svg></div>
<div class="t" style="left:363px;top:506px;font-size:14px;color:#333;word-spacing:0.6px">孙燕姿 - 时光小偷</div>
<svg style="left:485px;top:509px" width="17" height="9" viewBox="0 0 17 9"><rect x="0" y="0" width="17" height="9" rx="1.6" fill="#8271cd"/><g fill="none" stroke="#fff" stroke-width="1.05"><path d="M7.6 2.9 H2.9 V4.5 H7.4 V6.1 H2.6" /><path d="M9.8 2.9 H14.2 V6.1 H9.8 Z M12.3 4.9 L14.8 6.9" /></g></svg>
<div class="t" style="left:685px;top:506px;font-size:14px;color:#333">是时候</div>
<svg style="left:863px;top:508px" width="12" height="13" viewBox="0 0 12 13"><g fill="none" stroke="#8c8c8c" stroke-width="1"><rect x="0.5" y="0.5" width="11" height="12"/><path d="M3.1 0.5 V12.5 M8.9 0.5 V12.5 M3.1 6.5 H8.9"/><path d="M0.5 2.5 H3.1 M0.5 4.5 H3.1 M0.5 6.5 H3.1 M0.5 8.5 H3.1 M0.5 10.5 H3.1 M8.9 2.5 H11.5 M8.9 4.5 H11.5 M8.9 6.5 H11.5 M8.9 8.5 H11.5 M8.9 10.5 H11.5" stroke-width="0.8"/></g></svg>
<svg style="left:885px;top:507px" width="12" height="14" viewBox="0 0 12 14"><path d="M0.8 0.9 L11 7 L0.8 13.1 Z" fill="none" stroke="#8c8c8c" stroke-width="1" stroke-linejoin="round"/></svg>
<svg style="left:907px;top:508px" width="13" height="13" viewBox="0 0 13 13"><g fill="none" stroke="#8c8c8c" stroke-width="1"><rect x="0.5" y="0.5" width="12" height="12"/><path d="M6.5 2.6 V10.4 M2.6 6.5 H10.4"/></g></svg>
<svg style="left:930px;top:506px" width="17" height="16" viewBox="0 0 17 16"><g fill="none" stroke="#8c8c8c" stroke-width="1" stroke-linecap="round" stroke-linejoin="round"><path d="M5.7 0.6 V9.4"/><path d="M2.2 5.9 L5.7 9.6 L9.2 5.9"/><path d="M0.6 9.4 V12.4 H11.6 V9.4"/></g><circle cx="11.6" cy="11.2" r="4.5" fill="#e2bc2c"/><path d="M9.7 8.5 L11.6 11 L13.5 8.5 M11.6 11 V14 M9.8 11.2 H13.4 M9.8 12.6 H13.4" fill="none" stroke="#fffbe6" stroke-width="0.95"/></svg>
<svg style="left:953px;top:507px" width="15" height="15" viewBox="0 0 15 15"><circle cx="7.5" cy="7.5" r="6.8" fill="none" stroke="#8c8c8c" stroke-width="1"/><g fill="#8c8c8c"><circle cx="4.4" cy="7.5" r="1"/><circle cx="7.5" cy="7.5" r="1"/><circle cx="10.6" cy="7.5" r="1"/></g></svg>
<div class="hl" style="left:329px;top:530px;width:647px"></div>
<div class="cb" style="left:339px;top:541px"><svg style="left:1.5px;top:1.5px" width="10" height="9" viewBox="0 0 10 9"><path d="M1.2 4.6 L3.9 7.2 L8.8 1.6" fill="none" stroke="#2a82ad" stroke-width="2" stroke-linecap="round" stroke-linejoin="round"/></svg></div>
<div class="t" style="left:363px;top:541px;font-size:14px;color:#333;word-spacing:0.6px">蔡琴 - 被遗忘的时光</div>
<svg style="left:499px;top:544px" width="17" height="9" viewBox="0 0 17 9"><rect x="0" y="0" width="17" height="9" rx="1.6" fill="#8271cd"/><g fill="none" stroke="#fff" stroke-width="1.05"><path d="M7.6 2.9 H2.9 V4.5 H7.4 V6.1 H2.6" /><path d="M9.8 2.9 H14.2 V6.1 H9.8 Z M12.3 4.9 L14.8 6.9" /></g></svg>
<div class="t" style="left:685px;top:541px;font-size:14px;color:#333">恰似你的温柔</div>
<svg style="left:885px;top:542px" width="12" height="14" viewBox="0 0 12 14"><path d="M0.8 0.9 L11 7 L0.8 13.1 Z" fill="none" stroke="#8c8c8c" stroke-width="1" stroke-linejoin="round"/></svg>
<svg style="left:907px;top:543px" width="13" height="13" viewBox="0 0 13 13"><g fill="none" stroke="#8c8c8c" stroke-width="1"><rect x="0.5" y="0.5" width="12" height="12"/><path d="M6.5 2.6 V10.4 M2.6 6.5 H10.4"/></g></svg>
<svg style="left:930px;top:541px" width="17" height="16" viewBox="0 0 17 16"><g fill="none" stroke="#8c8c8c" stroke-width="1" stroke-linecap="round" stroke-linejoin="round"><path d="M5.7 0.6 V9.4"/><path d="M2.2 5.9 L5.7 9.6 L9.2 5.9"/><path d="M0.6 9.4 V12.4 H11.6 V9.4"/></g><circle cx="11.6" cy="11.2" r="4.5" fill="#e2bc2c"/><path d="M9.7 8.5 L11.6 11 L13.5 8.5 M11.6 11 V14 M9.8 11.2 H13.4 M9.8 12.6 H13.4" fill="none" stroke="#fffbe6" stroke-width="0.95"/></svg>
<svg style="left:953px;top:542px" width="15" height="15" viewBox="0 0 15 15"><circle cx="7.5" cy="7.5" r="6.8" fill="none" stroke="#8c8c8c" stroke-width="1"/><g fill="#8c8c8c"><circle cx="4.4" cy="7.5" r="1"/><circle cx="7.5" cy="7.5" r="1"/><circle cx="10.6" cy="7.5" r="1"/></g></svg>
<div class="hl" style="left:329px;top:565px;width:647px"></div>
<div class="cb" style="left:339px;top:576px"><svg style="left:1.5px;top:1.5px" width="10" height="9" viewBox="0 0 10 9"><path d="M1.2 4.6 L3.9 7.2 L8.8 1.6" fill="none" stroke="#2a82ad" stroke-width="2" stroke-linecap="round" stroke-linejoin="round"/></svg></div>
<div class="t" style="left:363px;top:576px;font-size:14px;color:#333;word-spacing:0.6px"><span style="letter-spacing:0.45px">KingStar</span> - 其实我不懂</div>
<svg style="left:514px;top:579px" width="17" height="9" viewBox="0 0 17 9"><rect x="0" y="0" width="17" height="9" rx="1.6" fill="#5fae2e"/><g fill="none" stroke="#fff" stroke-width="1.05"><path d="M3 2.4 V6.6 M3 4.5 H7.4 M7.4 2.4 V6.6" /><path d="M9.8 2.9 H14.2 V6.1 H9.8 Z M12.3 4.9 L14.8 6.9" /></g></svg>
<div class="t" style="left:685px;top:576px;font-size:14px;color:#333">我喜欢你你不喜欢我</div>
<svg style="left:885px;top:577px" width="12" height="14" viewBox="0 0 12 14"><path d="M0.8 0.9 L11 7 L0.8 13.1 Z" fill="none" stroke="#8c8c8c" stroke-width="1" stroke-linejoin="round"/></svg>
<svg style="left:907px;top:578px" width="13" height="13" viewBox="0 0 13 13"><g fill="none" stroke="#8c8c8c" stroke-width="1"><rect x="0.5" y="0.5" width="12" height="12"/><path d="M6.5 2.6 V10.4 M2.6 6.5 H10.4"/></g></svg>
<svg style="left:930px;top:576px" width="17" height="16" viewBox="0 0 17 16"><g fill="none" stroke="#8c8c8c" stroke-width="1" stroke-linecap="round" stroke-linejoin="round"><path d="M5.7 0.6 V9.4"/><path d="M2.2 5.9 L5.7 9.6 L9.2 5.9"/><path d="M0.6 9.4 V12.4 H11.6 V9.4"/></g></svg>
<svg style="left:953px;top:577px" width="15" height="15" viewBox="0 0 15 15"><circle cx="7.5" cy="7.5" r="6.8" fill="none" stroke="#8c8c8c" stroke-width="1"/><g fill="#8c8c8c"><circle cx="4.4" cy="7.5" r="1"/><circle cx="7.5" cy="7.5" r="1"/><circle cx="10.6" cy="7.5" r="1"/></g></svg>
<div class="hl" style="left:329px;top:600px;width:647px"></div>
<div class="cb" style="left:339px;top:611px"><svg style="left:1.5px;top:1.5px" width="10" height="9" viewBox="0 0 10 9"><path d="M1.2 4.6 L3.9 7.2 L8.8 1.6" fill="none" stroke="#2a82ad" stroke-width="2" stroke-linecap="round" stroke-linejoin="round"/></svg></div>
<div class="t" style="left:363px;top:611px;font-size:14px;color:#333;word-spacing:0.6px">李代沫 - 取名回忆的时光 (吉他版)</div>
<svg style="left:583px;top:614px" width="17" height="9" viewBox="0 0 17 9"><rect x="0" y="0" width="17" height="9" rx="1.6" fill="#8271cd"/><g fill="none" stroke="#fff" stroke-width="1.05"><path d="M7.6 2.9 H2.9 V4.5 H7.4 V6.1 H2.6" /><path d="M9.8 2.9 H14.2 V6.1 H9.8 Z M12.3 4.9 L14.8 6.9" /></g></svg>
<div class="t" style="left:685px;top:611px;font-size:14px;color:#333">中国好声音之为你转身...</div>
<svg style="left:885px;top:612px" width="12" height="14" viewBox="0 0 12 14"><path d="M0.8 0.9 L11 7 L0.8 13.1 Z" fill="none" stroke="#8c8c8c" stroke-width="1" stroke-linejoin="round"/></svg>
<svg style="left:907px;top:613px" width="13" height="13" viewBox="0 0 13 13"><g fill="none" stroke="#8c8c8c" stroke-width="1"><rect x="0.5" y="0.5" width="12" height="12"/><path d="M6.5 2.6 V10.4 M2.6 6.5 H10.4"/></g></svg>
<svg style="left:930px;top:611px" width="17" height="16" viewBox="0 0 17 16"><g fill="none" stroke="#8c8c8c" stroke-width="1" stroke-linecap="round" stroke-linejoin="round"><path d="M5.7 0.6 V9.4"/><path d="M2.2 5.9 L5.7 9.6 L9.2 5.9"/><path d="M0.6 9.4 V12.4 H11.6 V9.4"/></g><circle cx="11.6" cy="11.2" r="4.5" fill="#e2bc2c"/><path d="M9.7 8.5 L11.6 11 L13.5 8.5 M11.6 11 V14 M9.8 11.2 H13.4 M9.8 12.6 H13.4" fill="none" stroke="#fffbe6" stroke-width="0.95"/></svg>
<svg style="left:953px;top:612px" width="15" height="15" viewBox="0 0 15 15"><circle cx="7.5" cy="7.5" r="6.8" fill="none" stroke="#8c8c8c" stroke-width="1"/><g fill="#8c8c8c"><circle cx="4.4" cy="7.5" r="1"/><circle cx="7.5" cy="7.5" r="1"/><circle cx="10.6" cy="7.5" r="1"/></g></svg>
<div class="abs" style="left:927px;top:287px;width:24px;height:68px;border:3px solid #e8873c"></div>
<div class="abs" style="left:927px;top:396px;width:24px;height:61px;border:3px solid #e8873c"></div>
<div class="abs" style="left:927px;top:497px;width:24px;height:65px;border:3px solid #e8873c"></div>
<div id="bot" class="abs"></div>
<div class="abs" style="left:816px;top:630px;width:181px;height:56px;border-radius:26px;background:#0875dd"></div>
<svg style="left:15px;top:639px" width="36" height="36" viewBox="0 0 36 36"><circle cx="18" cy="18" r="16.6" fill="none" stroke="#fff" stroke-width="1.6"/><rect x="11.6" y="11.4" width="2.2" height="13.2" fill="#e8eef6"/><path d="M23.4 11 V25 L14.6 18 Z" fill="#e8eef6"/></svg>
<svg style="left:70px;top:635px" width="44" height="44" viewBox="0 0 44 44"><circle cx="22" cy="22" r="20.6" fill="none" stroke="#fff" stroke-width="1.8"/><path d="M17 13.4 L31 22 L17 30.6 Z" fill="#e8eef6"/></svg>
<svg style="left:133px;top:639px" width="36" height="36" viewBox="0 0 36 36"><circle cx="18" cy="18" r="16.6" fill="none" stroke="#fff" stroke-width="1.6"/><rect x="22.2" y="11.4" width="2.2" height="13.2" fill="#e8eef6"/><path d="M12.6 11 V25 L21.4 18 Z" fill="#e8eef6"/></svg>
<div class="t" style="left:205px;top:641px;font-size:14px;font-weight:bold;color:#fff;letter-spacing:0">酷狗音乐</div>
<div class="t" style="left:502px;top:642px;font-size:12.5px;font-weight:bold;color:#fff;letter-spacing:0.15px">00:00/00:00</div>
<div class="abs" style="left:205px;top:667px;width:365px;height:3px;border-radius:2px;background:#0a57b4"></div>
<svg style="left:607px;top:649px" width="19" height="17" viewBox="0 0 19 17"><path d="M9.5 15.6 C6.4 12.8 1 9.4 1 5.2 C1 2.6 2.8 1 5 1 C7 1 8.6 2.2 9.5 3.8 C10.4 2.2 12 1 14 1 C16.2 1 18 2.6 18 5.2 C18 9.4 12.6 12.8 9.5 15.6 Z" fill="none" stroke="#3f92e8" stroke-width="1.5"/></svg>
<svg style="left:644px;top:648px" width="20" height="18" viewBox="0 0 20 18"><g fill="none" stroke="#3f92e8" stroke-width="1.6" stroke-linecap="round" stroke-linejoin="round"><path d="M10 1 V11.6"/><path d="M5.2 7 L10 11.8 L14.8 7"/><path d="M1 12 V16.8 H19 V12"/></g></svg>
<svg style="left:682px;top:647px" width="21" height="21" viewBox="0 0 21 21"><circle cx="10.5" cy="10.5" r="9.4" fill="none" stroke="#3f92e8" stroke-width="1.5"/><g fill="#3f92e8"><circle cx="6.3" cy="10.5" r="1.1"/><circle cx="10.5" cy="10.5" r="1.1"/><circle cx="14.7" cy="10.5" r="1.1"/></g></svg>
<svg style="left:719px;top:648px" width="22" height="18" viewBox="0 0 22 18"><g fill="none" stroke="#e2f5ff" stroke-width="1.9" stroke-linecap="round" stroke-linejoin="round"><path d="M2 7.4 V6 Q2 4 4 4 H19.4"/><path d="M16.4 1 L19.6 4 L16.4 7"/><path d="M20 10.6 V12 Q20 14 18 14 H2.6"/><path d="M5.6 11 L2.4 14 L5.6 17"/></g></svg>
<svg style="left:758px;top:647px" width="21" height="20" viewBox="0 0 21 20"><g fill="none" stroke="#fff" stroke-width="1.8" stroke-linecap="round" stroke-linejoin="round"><path d="M1.2 6.6 H5 L10.4 1.6 V18.4 L5 13.4 H1.2 Z"/><path d="M13.6 6.6 A4.6 4.6 0 0 1 13.6 13.4"/><path d="M16.2 3.4 A8.6 8.6 0 0 1 16.2 16.6"/></g></svg>
<div class="abs" style="left:795.5px;top:646.5px;width:20.5px;height:21px;overflow:hidden"><div class="abs" style="left:0;top:0;width:44px;height:21px;border:1.5px solid #d4effd;border-radius:10.5px"></div><div class="abs" style="left:6.8px;top:6.6px;width:7.8px;height:7.8px;border-radius:50%;background:#b6cef3"></div></div>
<div class="abs" style="left:0;top:0;width:999px;height:1px;background:#0d2350"></div>
<div class="abs" style="left:0;top:0;width:1px;height:690px;background:#080d2a"></div>
<div class="abs" style="left:998px;top:0;width:1px;height:690px;background:#080d2a"></div>
<div class="abs" style="left:0;top:688px;width:999px;height:1px;background:#0a449c"></div>
<div class="abs" style="left:0;top:689px;width:999px;height:1px;background:#0a1650"></div>
<svg style="left:982px;top:672px" width="15" height="15" viewBox="0 0 15 15"><path d="M14 2 L2 14 M14 6 L6 14 M14 10 L10 14" stroke="#3f93ea" stroke-width="1"/></svg>
</body></html>
